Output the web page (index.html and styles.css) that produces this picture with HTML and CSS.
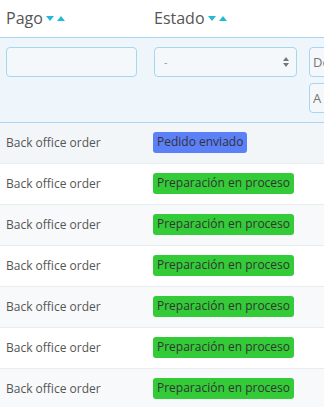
FILE: index.html
```html
<!DOCTYPE html>
<html lang="es">
<head>
  <meta charset="UTF-8">
  <meta name="viewport" content="width=device-width, initial-scale=1">
  <title>Pedidos</title>
  <link rel="stylesheet" href="styles.css">
</head>
<body>

  <table class="orders">
    <colgroup>
      <col class="col-pago">
      <col class="col-estado">
      <col class="col-fecha">
    </colgroup>
    <thead>
      <tr class="head-row">
        <th>Pago <span class="sort"><i class="down"></i><i class="up"></i></span></th>
        <th>Estado <span class="sort"><i class="down"></i><i class="up"></i></span></th>
        <th></th>
      </tr>
      <tr class="filter-row">
        <td><input class="field field-text" type="text"></td>
        <td>
          <div class="field field-select">
            <span>-</span>
            <svg width="6" height="10" viewBox="0 0 6 10"><path d="M3 0 L6 4 H0 Z M3 10 L0 6 H6 Z" fill="#6c7a80"/></svg>
          </div>
        </td>
        <td>
          <div class="dates">
            <div class="field field-date">De</div>
            <div class="field field-date">A</div>
          </div>
        </td>
      </tr>
    </thead>
    <tbody>
      <tr><td>Back office order</td><td><span class="badge sent">Pedido enviado</span></td><td></td></tr>
      <tr><td>Back office order</td><td><span class="badge prep">Preparación en proceso</span></td><td></td></tr>
      <tr><td>Back office order</td><td><span class="badge prep">Preparación en proceso</span></td><td></td></tr>
      <tr><td>Back office order</td><td><span class="badge prep">Preparación en proceso</span></td><td></td></tr>
      <tr><td>Back office order</td><td><span class="badge prep">Preparación en proceso</span></td><td></td></tr>
      <tr><td>Back office order</td><td><span class="badge prep">Preparación en proceso</span></td><td></td></tr>
      <tr><td>Back office order</td><td><span class="badge prep">Preparación en proceso</span></td><td></td></tr>
    </tbody>
  </table>

</body>
</html>
```

FILE: styles.css
```css
* {
  box-sizing: border-box;
}

body {
  font-family: "Open Sans", "Liberation Sans", sans-serif;
  margin: 0;
  padding: 0;
  background: #fff;
  color: #555;
  overflow: hidden;
}

.orders {
  border-collapse: collapse;
  table-layout: fixed;
  width: 503px;
}

.col-pago { width: 148px; }
.col-estado { width: 155px; }
.col-fecha { width: 200px; }

.head-row th {
  height: 37px;
  padding: 0 6px;
  text-align: left;
  font-weight: normal;
  font-size: 16px;
  color: #555;
  border-bottom: 1px solid #a8d6ee;
  vertical-align: middle;
}

.sort {
  display: inline-flex;
  gap: 3px;
  vertical-align: middle;
  margin-left: -1px;
  position: relative;
  top: -1px;
}

.sort i {
  width: 0;
  height: 0;
  border-left: 4px solid transparent;
  border-right: 4px solid transparent;
}

.sort .down {
  border-top: 5px solid #25b9d7;
}

.sort .up {
  border-bottom: 5px solid #25b9d7;
}

.filter-row td {
  background: #eef6fc;
  height: 85px;
  padding: 9px 6px 9px 6px;
  vertical-align: top;
  border-bottom: 1px solid #a8d6ee;
}

.field {
  height: 30px;
  border: 1px solid #a6d6f0;
  border-radius: 4px;
  background: #f5f8fa;
  font-family: inherit;
  font-size: 12px;
  color: #7a8a90;
}

.field-text {
  display: block;
  width: 131px;
  margin: 0;
  padding: 0 8px;
}

.field-select {
  width: 143px;
  display: flex;
  align-items: center;
  justify-content: space-between;
  padding: 0 7px 0 9px;
}

.field-select span {
  color: #999;
  font-size: 11px;
}

.dates {
  display: flex;
  flex-direction: column;
  gap: 6px;
}

.field-date {
  width: 160px;
  display: flex;
  align-items: center;
  padding: 0 3px;
  font-size: 13px;
  color: #777;
}

tbody td {
  height: 41px;
  padding: 0 6px;
  font-size: 12px;
  color: #555;
  border-bottom: 1px solid #e8edf0;
  vertical-align: middle;
  white-space: nowrap;
}

tbody tr:nth-child(odd) td {
  background: #f8f9fb;
}

tbody tr:first-child td {
  background: #f3f6f9;
}

.badge {
  display: inline-block;
  margin-left: -1px;
  padding: 2px 4px 3px 4px;
  border-radius: 3px;
  font-size: 12px;
  color: #333;
  line-height: 16px;
}

.badge.sent {
  background: #5b80f8;
}

.badge.prep {
  background: #34cb38;
}
```
